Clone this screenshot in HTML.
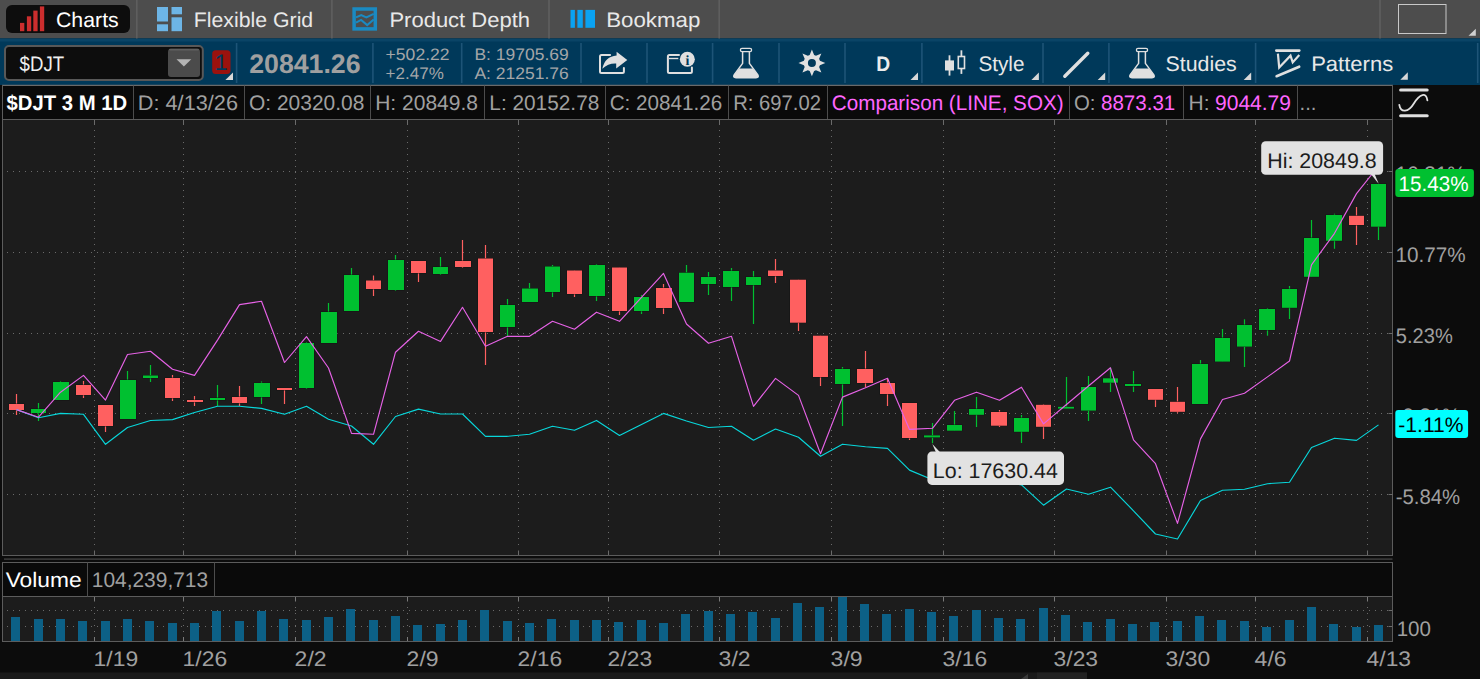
<!DOCTYPE html>
<html lang="en">
<head>
<meta charset="utf-8">
<title>$DJT Chart</title>
<style>
html,body{margin:0;padding:0;background:#0c0c0c;overflow:hidden;}
body{width:1480px;height:679px;font-family:"Liberation Sans", "DejaVu Sans", sans-serif;}
svg{display:block;position:absolute;left:0;top:0;}
</style>
</head>
<body>
<svg width="1480" height="679" viewBox="0 0 1480 679" font-family='"Liberation Sans", "DejaVu Sans", sans-serif' text-rendering="geometricPrecision">
<rect x="0" y="0" width="1480" height="679" fill="#0c0c0c"/>
<rect x="0" y="0" width="1480" height="38.5" fill="#4d4d4d"/>
<rect x="0" y="38.5" width="1480" height="46.5" fill="#00395a"/>
<rect x="0" y="38.5" width="1480" height="3" fill="#0a4466"/>
<g id="tabs">
<rect x="6" y="5" width="124" height="28" rx="6" fill="#0d0d0d"/>
<rect x="20.0" y="22.9" width="4.3" height="8.3" fill="#cc2e2e"/>
<rect x="26.9" y="16.3" width="4.3" height="14.9" fill="#cc2e2e"/>
<rect x="33.3" y="10.6" width="4.3" height="20.6" fill="#cc2e2e"/>
<rect x="39.9" y="6.4" width="4.3" height="24.8" fill="#cc2e2e"/>
<text x="56.0" y="27.0" font-size="21" fill="#ffffff" textLength="62.7" lengthAdjust="spacingAndGlyphs">Charts</text>
<rect x="136.05" y="0" width="1.5" height="38.5" fill="#606060"/>
<rect x="331.15" y="0" width="1.5" height="38.5" fill="#606060"/>
<rect x="548.25" y="0" width="1.5" height="38.5" fill="#606060"/>
<rect x="718.45" y="0" width="1.5" height="38.5" fill="#606060"/>
<rect x="1379.25" y="0" width="1.5" height="38.5" fill="#606060"/>
<rect x="157" y="7" width="11" height="14.5" fill="#6db5e6"/>
<rect x="157" y="24.3" width="11" height="6.9" fill="#6db5e6"/>
<rect x="171.5" y="7" width="10.5" height="7.3" fill="#6db5e6"/>
<rect x="171.5" y="17.3" width="10.5" height="13.9" fill="#6db5e6"/>
<text x="193.8" y="27.0" font-size="21" fill="#e8e8e8" textLength="119.4" lengthAdjust="spacingAndGlyphs">Flexible Grid</text>
<rect x="354.1" y="9" width="21.2" height="19.9" fill="none" stroke="#1a8ac2" stroke-width="3.5"/>
<polyline points="356,17.4 361.2,15 366.4,17.4 373.7,13.8" fill="none" stroke="#1a8ac2" stroke-width="2"/>
<polyline points="356,22.7 361.1,19.9 367.2,25.1 373.7,19.5" fill="none" stroke="#1a8ac2" stroke-width="2"/>
<text x="389.4" y="27.0" font-size="21" fill="#e8e8e8" textLength="140.7" lengthAdjust="spacingAndGlyphs">Product Depth</text>
<rect x="570.5" y="9.9" width="4.4" height="17.9" fill="#0aa2f2"/>
<rect x="577.4" y="9.9" width="5.4" height="17.9" fill="#0aa2f2"/>
<rect x="585.4" y="9.9" width="9.6" height="17.9" fill="#0aa2f2"/>
<text x="606.2" y="27.0" font-size="21" fill="#e8e8e8" textLength="94.1" lengthAdjust="spacingAndGlyphs">Bookmap</text>
<rect x="1398.5" y="4.5" width="47.5" height="29" fill="none" stroke="#c8c8c8" stroke-width="1"/>
<polygon points="1468.5,35.8 1475.8,35.8 1475.8,28.7" fill="#d0d0d0"/>
</g>
<g id="toolbar">
<rect x="235.79999999999998" y="43" width="1.6" height="40" fill="#1d5477"/>
<rect x="372.09999999999997" y="43" width="1.6" height="40" fill="#1d5477"/>
<rect x="460.9" y="43" width="1.6" height="40" fill="#1d5477"/>
<rect x="580.2" y="43" width="1.6" height="40" fill="#1d5477"/>
<rect x="646.2" y="43" width="1.6" height="40" fill="#1d5477"/>
<rect x="711.8000000000001" y="43" width="1.6" height="40" fill="#1d5477"/>
<rect x="778.2" y="43" width="1.6" height="40" fill="#1d5477"/>
<rect x="844.2" y="43" width="1.6" height="40" fill="#1d5477"/>
<rect x="921.1" y="43" width="1.6" height="40" fill="#1d5477"/>
<rect x="1042.2" y="43" width="1.6" height="40" fill="#1d5477"/>
<rect x="1108.1000000000001" y="43" width="1.6" height="40" fill="#1d5477"/>
<rect x="1254.8" y="43" width="1.6" height="40" fill="#1d5477"/>
<rect x="1476.9" y="43" width="1.6" height="40" fill="#1d5477"/>
<rect x="5" y="46" width="197.8" height="34" rx="4" fill="#0d0d0d" stroke="#585858" stroke-width="2"/>
<rect x="168" y="48.8" width="32" height="28.3" rx="3" fill="#4b4b4b"/>
<rect x="169" y="48.8" width="30" height="1.6" rx="0.8" fill="#606060"/>
<polygon points="176.5,59.2 191.3,59.2 183.9,66.6" fill="#b4b4b4"/>
<text x="19.6" y="71.1" font-size="21" fill="#f0f0f0" textLength="44.5" lengthAdjust="spacingAndGlyphs">$DJT</text>
<rect x="212.2" y="50.2" width="18.3" height="23.7" rx="3.5" fill="#9b120e"/>
<text x="214.4" y="70.4" font-size="22.5" fill="#00395a" textLength="13.2" lengthAdjust="spacingAndGlyphs">1</text>
<polygon points="225.4,80 233,80 233,72.4" fill="#d8d8d8"/>
<text x="249.2" y="73.0" font-size="26.8" font-weight="bold" fill="#a0a0a0" textLength="111.4" lengthAdjust="spacingAndGlyphs">20841.26</text>
<text x="385.6" y="60.0" font-size="16.6" fill="#a4a6a8" textLength="64.0" lengthAdjust="spacingAndGlyphs">+502.22</text>
<text x="385.6" y="78.9" font-size="16.6" fill="#a4a6a8" textLength="58.2" lengthAdjust="spacingAndGlyphs">+2.47%</text>
<text x="474.4" y="60.0" font-size="16.6" fill="#a4a6a8" textLength="94.3" lengthAdjust="spacingAndGlyphs">B: 19705.69</text>
<text x="474.4" y="78.9" font-size="16.6" fill="#a4a6a8" textLength="94.3" lengthAdjust="spacingAndGlyphs">A: 21251.76</text>
<path d="M610.1,55 H601.5 Q600,55 600,56.5 V71.4 Q600,72.9 601.5,72.9 H622.4 Q623.9,72.9 623.9,71.4 V68" fill="none" stroke="#e0e0e0" stroke-width="2" stroke-linecap="round"/>
<path d="M616.6,51.8 L627.3,59.9 L616.2,68.4 L616.2,63.5 Q608.5,63 602.3,68.8 Q605,56.5 616.6,55.6 Z" fill="#e0e0e0"/>
<path d="M679,55 H669.4 Q667.9,55 667.9,56.5 V71.4 Q667.9,72.9 669.4,72.9 H690.4 Q691.9,72.9 691.9,71.4 V67.6" fill="none" stroke="#e0e0e0" stroke-width="2" stroke-linecap="round"/>
<line x1="669" y1="58.5" x2="678.3" y2="58.5" stroke="#e0e0e0" stroke-width="1.4"/>
<circle cx="687.35" cy="59.3" r="7.5" fill="#e0e0e0"/>
<text x="687.5" y="64.6" font-size="14" font-weight="bold" font-family='"Liberation Serif", serif' fill="#00395a" text-anchor="middle">i</text>
<g transform="translate(0,0)">
<rect x="740.4" y="48.4" width="11.2" height="3.3" rx="1.6" fill="none" stroke="#e0e0e0" stroke-width="1.3"/>
<path d="M742.6,51.8 V63.4 L734.3,74.6 Q732.6,77.7 736,77.7 H756 Q759.4,77.7 757.7,74.6 L749.4,63.4 V51.8" fill="none" stroke="#e0e0e0" stroke-width="1.5" stroke-linejoin="round"/>
<path d="M739.4,68.4 H752.6 L757.7,74.6 Q759.4,77.7 756,77.7 H736 Q732.6,77.7 734.3,74.6 Z" fill="#e0e0e0"/>
</g>
<path d="M809.69,54.95 L811.90,49.55 L814.11,54.95 L815.99,55.73 L821.38,53.47 L819.12,58.86 L819.90,60.74 L825.30,62.95 L819.90,65.16 L819.12,67.04 L821.38,72.43 L815.99,70.17 L814.11,70.95 L811.90,76.35 L809.69,70.95 L807.81,70.17 L802.42,72.43 L804.68,67.04 L803.90,65.16 L798.50,62.95 L803.90,60.74 L804.68,58.86 L802.42,53.47 L807.81,55.73 Z M815.90,62.95 A4,4 0 1,0 807.90,62.95 A4,4 0 1,0 815.90,62.95 Z" fill="#e0e0e0" fill-rule="evenodd"/>
<text x="876.3" y="70.6" font-size="21" font-weight="bold" fill="#ececec" textLength="13.9" lengthAdjust="spacingAndGlyphs">D</text>
<polygon points="910.5,79.9 918,79.9 918,72.4" fill="#d8d8d8"/>
<rect x="945" y="60.4" width="9" height="10.1" fill="#e0e0e0"/>
<line x1="949.5" y1="55.3" x2="949.5" y2="75.6" stroke="#e0e0e0" stroke-width="1.8"/>
<rect x="958.3" y="56.5" width="6.2" height="12" fill="none" stroke="#e0e0e0" stroke-width="1.6"/>
<line x1="961.4" y1="50.3" x2="961.4" y2="56" stroke="#e0e0e0" stroke-width="1.8"/>
<line x1="961.4" y1="69" x2="961.4" y2="73.9" stroke="#e0e0e0" stroke-width="1.8"/>
<text x="978.4" y="70.7" font-size="21" fill="#e8e8e8" textLength="46.0" lengthAdjust="spacingAndGlyphs">Style</text>
<polygon points="1031.4,79.9 1038.9,79.9 1038.9,72.4" fill="#d8d8d8"/>
<line x1="1064.8" y1="76.2" x2="1087.8" y2="53.2" stroke="#e0e0e0" stroke-width="3.4" stroke-linecap="round"/>
<polygon points="1097.7,79.9 1105.2,79.9 1105.2,72.4" fill="#d8d8d8"/>
<g transform="translate(396.0,0)">
<rect x="740.4" y="48.4" width="11.2" height="3.3" rx="1.6" fill="none" stroke="#e0e0e0" stroke-width="1.3"/>
<path d="M742.6,51.8 V63.4 L734.3,74.6 Q732.6,77.7 736,77.7 H756 Q759.4,77.7 757.7,74.6 L749.4,63.4 V51.8" fill="none" stroke="#e0e0e0" stroke-width="1.5" stroke-linejoin="round"/>
<path d="M739.4,68.4 H752.6 L757.7,74.6 Q759.4,77.7 756,77.7 H736 Q732.6,77.7 734.3,74.6 Z" fill="#e0e0e0"/>
</g>
<text x="1165.5" y="70.7" font-size="21" fill="#e8e8e8" textLength="71.2" lengthAdjust="spacingAndGlyphs">Studies</text>
<polygon points="1243.7,79.9 1251.2,79.9 1251.2,72.4" fill="#d8d8d8"/>
<line x1="1276.3" y1="50.6" x2="1299.3" y2="50.6" stroke="#e0e0e0" stroke-width="2.6" stroke-linecap="round"/>
<polyline points="1277.9,53.6 1279.2,67.5 1290.5,55.7 1292.7,62.4 1299.3,55" fill="none" stroke="#e0e0e0" stroke-width="2.2" stroke-linejoin="miter"/>
<line x1="1276.6" y1="76.2" x2="1299.2" y2="66.7" stroke="#e0e0e0" stroke-width="2.6" stroke-linecap="round"/>
<text x="1311.2" y="70.7" font-size="21" fill="#e8e8e8" textLength="82.0" lengthAdjust="spacingAndGlyphs">Patterns</text>
<polygon points="1400.3,79.8 1407.8,79.8 1407.8,72.3" fill="#d8d8d8"/>
</g>
<g id="info">
<rect x="2.5" y="85" width="1390.0" height="34.5" fill="#0a0a0a"/>
<line x1="2.0" y1="85.4" x2="1393.0" y2="85.4" stroke="#6a6a6a" stroke-width="1.2"/>
<line x1="133.5" y1="85.5" x2="133.5" y2="119" stroke="#4c4c4c" stroke-width="1"/>
<line x1="244.5" y1="85.5" x2="244.5" y2="119" stroke="#4c4c4c" stroke-width="1"/>
<line x1="370.5" y1="85.5" x2="370.5" y2="119" stroke="#4c4c4c" stroke-width="1"/>
<line x1="484.5" y1="85.5" x2="484.5" y2="119" stroke="#4c4c4c" stroke-width="1"/>
<line x1="605.5" y1="85.5" x2="605.5" y2="119" stroke="#4c4c4c" stroke-width="1"/>
<line x1="728.5" y1="85.5" x2="728.5" y2="119" stroke="#4c4c4c" stroke-width="1"/>
<line x1="827.5" y1="85.5" x2="827.5" y2="119" stroke="#4c4c4c" stroke-width="1"/>
<line x1="1069.5" y1="85.5" x2="1069.5" y2="119" stroke="#4c4c4c" stroke-width="1"/>
<line x1="1183.5" y1="85.5" x2="1183.5" y2="119" stroke="#4c4c4c" stroke-width="1"/>
<line x1="1297.5" y1="85.5" x2="1297.5" y2="119" stroke="#4c4c4c" stroke-width="1"/>
<text x="6.6" y="110.0" font-size="21" font-weight="bold" fill="#ffffff" textLength="120.6" lengthAdjust="spacingAndGlyphs">$DJT 3 M 1D</text>
<text x="137.8" y="110.0" font-size="21" fill="#a0a0a0" textLength="100.2" lengthAdjust="spacingAndGlyphs">D: 4/13/26</text>
<text x="249.0" y="110.0" font-size="21" fill="#a0a0a0" textLength="115.3" lengthAdjust="spacingAndGlyphs">O: 20320.08</text>
<text x="375.2" y="110.0" font-size="21" fill="#a0a0a0" textLength="102.8" lengthAdjust="spacingAndGlyphs">H: 20849.8</text>
<text x="489.3" y="110.0" font-size="21" fill="#a0a0a0" textLength="110.0" lengthAdjust="spacingAndGlyphs">L: 20152.78</text>
<text x="609.7" y="110.0" font-size="21" fill="#a0a0a0" textLength="112.5" lengthAdjust="spacingAndGlyphs">C: 20841.26</text>
<text x="733.2" y="110.0" font-size="21" fill="#a0a0a0" textLength="87.8" lengthAdjust="spacingAndGlyphs">R: 697.02</text>
<text x="831.8" y="110.0" font-size="21" fill="#ff66ff" textLength="231.8" lengthAdjust="spacingAndGlyphs">Comparison (LINE, SOX)</text>
<text x="1074.0" y="110.0" font-size="21" fill="#a0a0a0" textLength="21.5" lengthAdjust="spacingAndGlyphs">O:</text>
<text x="1101.0" y="110.0" font-size="21" fill="#ff66ff" textLength="74.3" lengthAdjust="spacingAndGlyphs">8873.31</text>
<text x="1188.5" y="110.0" font-size="21" fill="#a0a0a0" textLength="21.0" lengthAdjust="spacingAndGlyphs">H:</text>
<text x="1215.0" y="110.0" font-size="21" fill="#ff66ff" textLength="76.0" lengthAdjust="spacingAndGlyphs">9044.79</text>
<text x="1299.5" y="110.0" font-size="21" fill="#a0a0a0" textLength="16.9" lengthAdjust="spacingAndGlyphs">...</text>
<line x1="1400.6" y1="89.9" x2="1427.2" y2="89.9" stroke="#e0e0e0" stroke-width="3" stroke-linecap="round"/>
<line x1="1400.6" y1="115.8" x2="1427.2" y2="115.8" stroke="#e0e0e0" stroke-width="3" stroke-linecap="round"/>
<path d="M1399.3,104.8 C1400.6,112.9 1408.3,112.9 1414,103.3 C1419.7,93.7 1426.4,91.8 1427.4,100.4" fill="none" stroke="#e0e0e0" stroke-width="1.8" stroke-linecap="round"/>
</g>
<g id="chart">
<rect x="2.5" y="119.5" width="1390.0" height="436.0" fill="#1c1c1c"/>
<line x1="7" y1="171.5" x2="1391.5" y2="171.5" stroke="#6a6a6a" stroke-width="1" stroke-dasharray="1 5"/>
<line x1="7" y1="252.5" x2="1391.5" y2="252.5" stroke="#6a6a6a" stroke-width="1" stroke-dasharray="1 5"/>
<line x1="7" y1="333.5" x2="1391.5" y2="333.5" stroke="#6a6a6a" stroke-width="1" stroke-dasharray="1 5"/>
<line x1="7" y1="413.5" x2="1391.5" y2="413.5" stroke="#6a6a6a" stroke-width="1" stroke-dasharray="1 5"/>
<line x1="7" y1="494.5" x2="1391.5" y2="494.5" stroke="#6a6a6a" stroke-width="1" stroke-dasharray="1 5"/>
<line x1="94.5" y1="124" x2="94.5" y2="550.5" stroke="#6a6a6a" stroke-width="1" stroke-dasharray="1 5"/>
<line x1="94.5" y1="119.5" x2="94.5" y2="124.5" stroke="#6a6a6a" stroke-width="1"/>
<line x1="94.5" y1="551.0" x2="94.5" y2="555.5" stroke="#6a6a6a" stroke-width="1"/>
<line x1="183.5" y1="124" x2="183.5" y2="550.5" stroke="#6a6a6a" stroke-width="1" stroke-dasharray="1 5"/>
<line x1="183.5" y1="119.5" x2="183.5" y2="124.5" stroke="#6a6a6a" stroke-width="1"/>
<line x1="183.5" y1="551.0" x2="183.5" y2="555.5" stroke="#6a6a6a" stroke-width="1"/>
<line x1="295.5" y1="124" x2="295.5" y2="550.5" stroke="#6a6a6a" stroke-width="1" stroke-dasharray="1 5"/>
<line x1="295.5" y1="119.5" x2="295.5" y2="124.5" stroke="#6a6a6a" stroke-width="1"/>
<line x1="295.5" y1="551.0" x2="295.5" y2="555.5" stroke="#6a6a6a" stroke-width="1"/>
<line x1="407.5" y1="124" x2="407.5" y2="550.5" stroke="#6a6a6a" stroke-width="1" stroke-dasharray="1 5"/>
<line x1="407.5" y1="119.5" x2="407.5" y2="124.5" stroke="#6a6a6a" stroke-width="1"/>
<line x1="407.5" y1="551.0" x2="407.5" y2="555.5" stroke="#6a6a6a" stroke-width="1"/>
<line x1="518.5" y1="124" x2="518.5" y2="550.5" stroke="#6a6a6a" stroke-width="1" stroke-dasharray="1 5"/>
<line x1="518.5" y1="119.5" x2="518.5" y2="124.5" stroke="#6a6a6a" stroke-width="1"/>
<line x1="518.5" y1="551.0" x2="518.5" y2="555.5" stroke="#6a6a6a" stroke-width="1"/>
<line x1="608.5" y1="124" x2="608.5" y2="550.5" stroke="#6a6a6a" stroke-width="1" stroke-dasharray="1 5"/>
<line x1="608.5" y1="119.5" x2="608.5" y2="124.5" stroke="#6a6a6a" stroke-width="1"/>
<line x1="608.5" y1="551.0" x2="608.5" y2="555.5" stroke="#6a6a6a" stroke-width="1"/>
<line x1="719.5" y1="124" x2="719.5" y2="550.5" stroke="#6a6a6a" stroke-width="1" stroke-dasharray="1 5"/>
<line x1="719.5" y1="119.5" x2="719.5" y2="124.5" stroke="#6a6a6a" stroke-width="1"/>
<line x1="719.5" y1="551.0" x2="719.5" y2="555.5" stroke="#6a6a6a" stroke-width="1"/>
<line x1="831.5" y1="124" x2="831.5" y2="550.5" stroke="#6a6a6a" stroke-width="1" stroke-dasharray="1 5"/>
<line x1="831.5" y1="119.5" x2="831.5" y2="124.5" stroke="#6a6a6a" stroke-width="1"/>
<line x1="831.5" y1="551.0" x2="831.5" y2="555.5" stroke="#6a6a6a" stroke-width="1"/>
<line x1="943.5" y1="124" x2="943.5" y2="550.5" stroke="#6a6a6a" stroke-width="1" stroke-dasharray="1 5"/>
<line x1="943.5" y1="119.5" x2="943.5" y2="124.5" stroke="#6a6a6a" stroke-width="1"/>
<line x1="943.5" y1="551.0" x2="943.5" y2="555.5" stroke="#6a6a6a" stroke-width="1"/>
<line x1="1054.5" y1="124" x2="1054.5" y2="550.5" stroke="#6a6a6a" stroke-width="1" stroke-dasharray="1 5"/>
<line x1="1054.5" y1="119.5" x2="1054.5" y2="124.5" stroke="#6a6a6a" stroke-width="1"/>
<line x1="1054.5" y1="551.0" x2="1054.5" y2="555.5" stroke="#6a6a6a" stroke-width="1"/>
<line x1="1166.5" y1="124" x2="1166.5" y2="550.5" stroke="#6a6a6a" stroke-width="1" stroke-dasharray="1 5"/>
<line x1="1166.5" y1="119.5" x2="1166.5" y2="124.5" stroke="#6a6a6a" stroke-width="1"/>
<line x1="1166.5" y1="551.0" x2="1166.5" y2="555.5" stroke="#6a6a6a" stroke-width="1"/>
<line x1="1255.5" y1="124" x2="1255.5" y2="550.5" stroke="#6a6a6a" stroke-width="1" stroke-dasharray="1 5"/>
<line x1="1255.5" y1="119.5" x2="1255.5" y2="124.5" stroke="#6a6a6a" stroke-width="1"/>
<line x1="1255.5" y1="551.0" x2="1255.5" y2="555.5" stroke="#6a6a6a" stroke-width="1"/>
<line x1="1367.5" y1="124" x2="1367.5" y2="550.5" stroke="#6a6a6a" stroke-width="1" stroke-dasharray="1 5"/>
<line x1="1367.5" y1="119.5" x2="1367.5" y2="124.5" stroke="#6a6a6a" stroke-width="1"/>
<line x1="1367.5" y1="551.0" x2="1367.5" y2="555.5" stroke="#6a6a6a" stroke-width="1"/>
<line x1="16.5" y1="394.0" x2="16.5" y2="415.0" stroke="#ff6060" stroke-width="1.2"/>
<rect x="9" y="404.0" width="15" height="6.0" fill="#ff6060" stroke="#121212" stroke-width="0.8" paint-order="stroke"/>
<line x1="38.5" y1="403.0" x2="38.5" y2="421.0" stroke="#00c030" stroke-width="1.2"/>
<rect x="31" y="409.0" width="15" height="4.0" fill="#00c030" stroke="#121212" stroke-width="0.8" paint-order="stroke"/>
<line x1="60.5" y1="381.0" x2="60.5" y2="400.0" stroke="#00c030" stroke-width="1.2"/>
<rect x="53" y="382.0" width="16" height="18.0" fill="#00c030" stroke="#121212" stroke-width="0.8" paint-order="stroke"/>
<line x1="83.5" y1="381.0" x2="83.5" y2="398.0" stroke="#ff6060" stroke-width="1.2"/>
<rect x="76" y="385.0" width="15" height="10.0" fill="#ff6060" stroke="#121212" stroke-width="0.8" paint-order="stroke"/>
<line x1="105.5" y1="405.0" x2="105.5" y2="432.0" stroke="#ff6060" stroke-width="1.2"/>
<rect x="98" y="405.0" width="15" height="21.0" fill="#ff6060" stroke="#121212" stroke-width="0.8" paint-order="stroke"/>
<line x1="127.5" y1="371.0" x2="127.5" y2="419.0" stroke="#00c030" stroke-width="1.2"/>
<rect x="120" y="380.0" width="16" height="39.0" fill="#00c030" stroke="#121212" stroke-width="0.8" paint-order="stroke"/>
<line x1="150.5" y1="365.0" x2="150.5" y2="382.0" stroke="#00c030" stroke-width="1.2"/>
<rect x="143" y="375.5" width="15" height="2.5" fill="#00c030" stroke="#121212" stroke-width="0.8" paint-order="stroke"/>
<line x1="172.5" y1="375.0" x2="172.5" y2="401.0" stroke="#ff6060" stroke-width="1.2"/>
<rect x="165" y="378.0" width="15" height="20.0" fill="#ff6060" stroke="#121212" stroke-width="0.8" paint-order="stroke"/>
<line x1="194.5" y1="396.0" x2="194.5" y2="406.0" stroke="#ff6060" stroke-width="1.2"/>
<rect x="187" y="400.0" width="16" height="2.0" fill="#ff6060" stroke="#121212" stroke-width="0.8" paint-order="stroke"/>
<line x1="217.5" y1="385.0" x2="217.5" y2="406.0" stroke="#00c030" stroke-width="1.2"/>
<rect x="210" y="398.0" width="15" height="2.0" fill="#00c030" stroke="#121212" stroke-width="0.8" paint-order="stroke"/>
<line x1="239.5" y1="386.0" x2="239.5" y2="406.0" stroke="#ff6060" stroke-width="1.2"/>
<rect x="232" y="397.0" width="15" height="6.0" fill="#ff6060" stroke="#121212" stroke-width="0.8" paint-order="stroke"/>
<line x1="261.5" y1="381.5" x2="261.5" y2="404.0" stroke="#00c030" stroke-width="1.2"/>
<rect x="254" y="383.0" width="16" height="14.0" fill="#00c030" stroke="#121212" stroke-width="0.8" paint-order="stroke"/>
<line x1="284.5" y1="388.0" x2="284.5" y2="404.0" stroke="#ff6060" stroke-width="1.2"/>
<rect x="277" y="388.0" width="15" height="2.0" fill="#ff6060" stroke="#121212" stroke-width="0.8" paint-order="stroke"/>
<line x1="306.5" y1="342.0" x2="306.5" y2="389.0" stroke="#00c030" stroke-width="1.2"/>
<rect x="299" y="343.0" width="15" height="45.0" fill="#00c030" stroke="#121212" stroke-width="0.8" paint-order="stroke"/>
<line x1="328.5" y1="303.0" x2="328.5" y2="343.0" stroke="#00c030" stroke-width="1.2"/>
<rect x="321" y="312.0" width="16" height="31.0" fill="#00c030" stroke="#121212" stroke-width="0.8" paint-order="stroke"/>
<line x1="351.5" y1="268.0" x2="351.5" y2="311.0" stroke="#00c030" stroke-width="1.2"/>
<rect x="344" y="275.0" width="15" height="36.0" fill="#00c030" stroke="#121212" stroke-width="0.8" paint-order="stroke"/>
<line x1="373.5" y1="275.5" x2="373.5" y2="296.0" stroke="#ff6060" stroke-width="1.2"/>
<rect x="366" y="280.5" width="15" height="8.5" fill="#ff6060" stroke="#121212" stroke-width="0.8" paint-order="stroke"/>
<line x1="395.5" y1="255.0" x2="395.5" y2="291.0" stroke="#00c030" stroke-width="1.2"/>
<rect x="388" y="260.0" width="16" height="30.0" fill="#00c030" stroke="#121212" stroke-width="0.8" paint-order="stroke"/>
<line x1="418.5" y1="261.0" x2="418.5" y2="282.0" stroke="#ff6060" stroke-width="1.2"/>
<rect x="411" y="261.0" width="15" height="12.0" fill="#ff6060" stroke="#121212" stroke-width="0.8" paint-order="stroke"/>
<line x1="440.5" y1="257.0" x2="440.5" y2="275.0" stroke="#00c030" stroke-width="1.2"/>
<rect x="433" y="267.0" width="15" height="7.0" fill="#00c030" stroke="#121212" stroke-width="0.8" paint-order="stroke"/>
<line x1="462.5" y1="240.0" x2="462.5" y2="268.0" stroke="#ff6060" stroke-width="1.2"/>
<rect x="455" y="261.0" width="16" height="6.0" fill="#ff6060" stroke="#121212" stroke-width="0.8" paint-order="stroke"/>
<line x1="485.5" y1="245.0" x2="485.5" y2="365.0" stroke="#ff6060" stroke-width="1.2"/>
<rect x="478" y="258.5" width="15" height="73.5" fill="#ff6060" stroke="#121212" stroke-width="0.8" paint-order="stroke"/>
<line x1="507.5" y1="299.0" x2="507.5" y2="336.0" stroke="#00c030" stroke-width="1.2"/>
<rect x="500" y="305.0" width="15" height="22.0" fill="#00c030" stroke="#121212" stroke-width="0.8" paint-order="stroke"/>
<line x1="529.5" y1="283.0" x2="529.5" y2="302.0" stroke="#00c030" stroke-width="1.2"/>
<rect x="522" y="288.5" width="16" height="13.5" fill="#00c030" stroke="#121212" stroke-width="0.8" paint-order="stroke"/>
<line x1="552.5" y1="265.0" x2="552.5" y2="297.0" stroke="#00c030" stroke-width="1.2"/>
<rect x="545" y="266.5" width="15" height="25.5" fill="#00c030" stroke="#121212" stroke-width="0.8" paint-order="stroke"/>
<line x1="574.5" y1="270.0" x2="574.5" y2="297.0" stroke="#ff6060" stroke-width="1.2"/>
<rect x="567" y="270.5" width="15" height="23.5" fill="#ff6060" stroke="#121212" stroke-width="0.8" paint-order="stroke"/>
<line x1="596.5" y1="264.0" x2="596.5" y2="301.0" stroke="#00c030" stroke-width="1.2"/>
<rect x="589" y="265.0" width="16" height="31.0" fill="#00c030" stroke="#121212" stroke-width="0.8" paint-order="stroke"/>
<line x1="619.5" y1="267.5" x2="619.5" y2="315.0" stroke="#ff6060" stroke-width="1.2"/>
<rect x="612" y="267.5" width="15" height="43.5" fill="#ff6060" stroke="#121212" stroke-width="0.8" paint-order="stroke"/>
<line x1="641.5" y1="295.0" x2="641.5" y2="314.0" stroke="#00c030" stroke-width="1.2"/>
<rect x="634" y="297.0" width="15" height="14.0" fill="#00c030" stroke="#121212" stroke-width="0.8" paint-order="stroke"/>
<line x1="663.5" y1="284.0" x2="663.5" y2="314.0" stroke="#ff6060" stroke-width="1.2"/>
<rect x="656" y="288.0" width="16" height="20.0" fill="#ff6060" stroke="#121212" stroke-width="0.8" paint-order="stroke"/>
<line x1="686.5" y1="265.0" x2="686.5" y2="302.0" stroke="#00c030" stroke-width="1.2"/>
<rect x="679" y="272.7" width="15" height="29.3" fill="#00c030" stroke="#121212" stroke-width="0.8" paint-order="stroke"/>
<line x1="708.5" y1="272.0" x2="708.5" y2="295.0" stroke="#00c030" stroke-width="1.2"/>
<rect x="701" y="277.0" width="15" height="7.0" fill="#00c030" stroke="#121212" stroke-width="0.8" paint-order="stroke"/>
<line x1="731.5" y1="268.0" x2="731.5" y2="301.0" stroke="#00c030" stroke-width="1.2"/>
<rect x="723" y="271.0" width="16" height="16.0" fill="#00c030" stroke="#121212" stroke-width="0.8" paint-order="stroke"/>
<line x1="753.5" y1="271.0" x2="753.5" y2="324.0" stroke="#00c030" stroke-width="1.2"/>
<rect x="746" y="277.0" width="15" height="8.0" fill="#00c030" stroke="#121212" stroke-width="0.8" paint-order="stroke"/>
<line x1="775.5" y1="259.0" x2="775.5" y2="283.0" stroke="#ff6060" stroke-width="1.2"/>
<rect x="768" y="270.5" width="15" height="5.5" fill="#ff6060" stroke="#121212" stroke-width="0.8" paint-order="stroke"/>
<line x1="798.5" y1="279.5" x2="798.5" y2="331.0" stroke="#ff6060" stroke-width="1.2"/>
<rect x="790" y="279.7" width="16" height="43.0" fill="#ff6060" stroke="#121212" stroke-width="0.8" paint-order="stroke"/>
<line x1="820.5" y1="335.5" x2="820.5" y2="386.0" stroke="#ff6060" stroke-width="1.2"/>
<rect x="813" y="335.7" width="15" height="41.3" fill="#ff6060" stroke="#121212" stroke-width="0.8" paint-order="stroke"/>
<line x1="842.5" y1="367.0" x2="842.5" y2="426.0" stroke="#00c030" stroke-width="1.2"/>
<rect x="835" y="369.0" width="15" height="15.0" fill="#00c030" stroke="#121212" stroke-width="0.8" paint-order="stroke"/>
<line x1="865.5" y1="351.0" x2="865.5" y2="387.0" stroke="#ff6060" stroke-width="1.2"/>
<rect x="857" y="369.0" width="16" height="14.0" fill="#ff6060" stroke="#121212" stroke-width="0.8" paint-order="stroke"/>
<line x1="887.5" y1="378.5" x2="887.5" y2="406.0" stroke="#ff6060" stroke-width="1.2"/>
<rect x="880" y="383.0" width="15" height="11.0" fill="#ff6060" stroke="#121212" stroke-width="0.8" paint-order="stroke"/>
<line x1="909.5" y1="403.0" x2="909.5" y2="440.0" stroke="#ff6060" stroke-width="1.2"/>
<rect x="902" y="403.0" width="15" height="35.0" fill="#ff6060" stroke="#121212" stroke-width="0.8" paint-order="stroke"/>
<line x1="932.5" y1="423.0" x2="932.5" y2="443.3" stroke="#00c030" stroke-width="1.2"/>
<rect x="924" y="435.4" width="16" height="2.0" fill="#00c030" stroke="#121212" stroke-width="0.8" paint-order="stroke"/>
<line x1="954.5" y1="411.0" x2="954.5" y2="430.7" stroke="#00c030" stroke-width="1.2"/>
<rect x="947" y="425.0" width="15" height="5.7" fill="#00c030" stroke="#121212" stroke-width="0.8" paint-order="stroke"/>
<line x1="976.5" y1="397.0" x2="976.5" y2="427.0" stroke="#00c030" stroke-width="1.2"/>
<rect x="969" y="409.0" width="15" height="5.8" fill="#00c030" stroke="#121212" stroke-width="0.8" paint-order="stroke"/>
<line x1="999.5" y1="410.0" x2="999.5" y2="427.0" stroke="#ff6060" stroke-width="1.2"/>
<rect x="991" y="412.0" width="16" height="13.7" fill="#ff6060" stroke="#121212" stroke-width="0.8" paint-order="stroke"/>
<line x1="1021.5" y1="415.0" x2="1021.5" y2="443.0" stroke="#00c030" stroke-width="1.2"/>
<rect x="1014" y="418.0" width="15" height="13.8" fill="#00c030" stroke="#121212" stroke-width="0.8" paint-order="stroke"/>
<line x1="1043.5" y1="404.0" x2="1043.5" y2="439.0" stroke="#ff6060" stroke-width="1.2"/>
<rect x="1036" y="404.8" width="15" height="22.0" fill="#ff6060" stroke="#121212" stroke-width="0.8" paint-order="stroke"/>
<line x1="1066.5" y1="377.0" x2="1066.5" y2="408.6" stroke="#00c030" stroke-width="1.2"/>
<rect x="1058" y="406.8" width="16" height="1.8" fill="#00c030" stroke="#121212" stroke-width="0.8" paint-order="stroke"/>
<line x1="1088.5" y1="376.0" x2="1088.5" y2="421.0" stroke="#00c030" stroke-width="1.2"/>
<rect x="1081" y="387.0" width="15" height="23.6" fill="#00c030" stroke="#121212" stroke-width="0.8" paint-order="stroke"/>
<line x1="1110.5" y1="367.4" x2="1110.5" y2="392.0" stroke="#00c030" stroke-width="1.2"/>
<rect x="1103" y="378.3" width="15" height="4.4" fill="#00c030" stroke="#121212" stroke-width="0.8" paint-order="stroke"/>
<line x1="1133.5" y1="371.0" x2="1133.5" y2="392.0" stroke="#00c030" stroke-width="1.2"/>
<rect x="1125" y="384.0" width="16" height="2.0" fill="#00c030" stroke="#121212" stroke-width="0.8" paint-order="stroke"/>
<line x1="1155.5" y1="389.0" x2="1155.5" y2="407.0" stroke="#ff6060" stroke-width="1.2"/>
<rect x="1148" y="389.0" width="15" height="10.8" fill="#ff6060" stroke="#121212" stroke-width="0.8" paint-order="stroke"/>
<line x1="1177.5" y1="387.0" x2="1177.5" y2="413.3" stroke="#ff6060" stroke-width="1.2"/>
<rect x="1170" y="401.8" width="15" height="10.0" fill="#ff6060" stroke="#121212" stroke-width="0.8" paint-order="stroke"/>
<line x1="1200.5" y1="360.0" x2="1200.5" y2="404.0" stroke="#00c030" stroke-width="1.2"/>
<rect x="1192" y="364.0" width="16" height="40.0" fill="#00c030" stroke="#121212" stroke-width="0.8" paint-order="stroke"/>
<line x1="1222.5" y1="329.0" x2="1222.5" y2="361.6" stroke="#00c030" stroke-width="1.2"/>
<rect x="1215" y="338.0" width="15" height="23.6" fill="#00c030" stroke="#121212" stroke-width="0.8" paint-order="stroke"/>
<line x1="1244.5" y1="319.3" x2="1244.5" y2="367.0" stroke="#00c030" stroke-width="1.2"/>
<rect x="1237" y="325.0" width="15" height="21.6" fill="#00c030" stroke="#121212" stroke-width="0.8" paint-order="stroke"/>
<line x1="1267.5" y1="308.0" x2="1267.5" y2="335.7" stroke="#00c030" stroke-width="1.2"/>
<rect x="1259" y="309.0" width="16" height="21.0" fill="#00c030" stroke="#121212" stroke-width="0.8" paint-order="stroke"/>
<line x1="1289.5" y1="286.0" x2="1289.5" y2="319.0" stroke="#00c030" stroke-width="1.2"/>
<rect x="1282" y="289.0" width="15" height="18.8" fill="#00c030" stroke="#121212" stroke-width="0.8" paint-order="stroke"/>
<line x1="1311.5" y1="220.0" x2="1311.5" y2="276.8" stroke="#00c030" stroke-width="1.2"/>
<rect x="1304" y="238.0" width="15" height="38.8" fill="#00c030" stroke="#121212" stroke-width="0.8" paint-order="stroke"/>
<line x1="1334.5" y1="213.7" x2="1334.5" y2="248.8" stroke="#00c030" stroke-width="1.2"/>
<rect x="1326" y="215.0" width="16" height="25.8" fill="#00c030" stroke="#121212" stroke-width="0.8" paint-order="stroke"/>
<line x1="1356.5" y1="207.0" x2="1356.5" y2="245.0" stroke="#ff6060" stroke-width="1.2"/>
<rect x="1349" y="215.8" width="15" height="9.2" fill="#ff6060" stroke="#121212" stroke-width="0.8" paint-order="stroke"/>
<line x1="1378.5" y1="184.0" x2="1378.5" y2="240.0" stroke="#00c030" stroke-width="1.2"/>
<rect x="1371" y="184.0" width="15" height="42.7" fill="#00c030" stroke="#121212" stroke-width="0.8" paint-order="stroke"/>
<polyline points="16.5,409.6 38.5,417.8 60.5,413.4 83.5,414.3 105.5,444.3 127.5,427.5 150.5,420.5 172.5,419.6 194.5,412.5 217.5,406.3 239.5,406.2 261.5,408.4 284.5,414.3 306.5,406.3 328.5,419.3 351.5,426.0 373.5,444.3 395.5,416.5 418.5,409.1 440.5,414.0 462.5,414.0 485.5,436.3 507.5,436.3 529.5,434.3 552.5,426.3 574.5,430.3 596.5,420.4 619.5,435.4 641.5,424.4 663.5,413.4 686.5,421.0 708.5,427.5 731.5,426.3 753.5,440.2 775.5,429.0 798.5,437.3 820.5,456.3 842.5,444.2 865.5,446.8 887.5,448.4 909.5,470.1 932.5,479.8 954.5,481.0 976.5,483.0 999.5,481.0 1021.5,484.9 1043.5,505.2 1066.5,489.0 1088.5,494.3 1110.5,487.2 1133.5,510.8 1155.5,534.0 1177.5,539.0 1200.5,500.5 1222.5,490.2 1244.5,489.3 1267.5,483.7 1289.5,482.2 1311.5,447.5 1334.5,438.2 1356.5,440.4 1378.5,424.9" fill="none" stroke="#08d6da" stroke-width="1.15" stroke-linejoin="round"/>
<polyline points="16.5,409.6 38.5,417.2 60.5,392.2 83.5,375.4 105.5,400.1 127.5,354.5 150.5,351.3 172.5,369.2 194.5,375.4 217.5,340.1 239.5,304.6 261.5,301.3 284.5,362.5 306.5,336.7 328.5,368.0 351.5,433.4 373.5,434.3 395.5,352.2 418.5,331.3 440.5,341.4 462.5,307.3 485.5,346.3 507.5,336.3 529.5,336.3 552.5,321.3 574.5,329.2 596.5,312.2 619.5,321.3 641.5,297.4 663.5,273.4 686.5,324.0 708.5,343.3 731.5,336.3 753.5,406.4 775.5,378.4 798.5,395.4 820.5,453.7 842.5,397.1 865.5,387.7 887.5,378.3 909.5,429.4 932.5,428.3 954.5,400.3 976.5,392.2 999.5,400.3 1021.5,387.2 1043.5,423.9 1066.5,404.5 1088.5,386.0 1110.5,367.8 1133.5,439.8 1155.5,463.7 1177.5,523.4 1200.5,438.9 1222.5,399.5 1244.5,393.3 1267.5,376.9 1289.5,361.0 1311.5,264.8 1334.5,233.3 1356.5,193.6 1378.5,166.0" fill="none" stroke="#e662e6" stroke-width="1.15" stroke-linejoin="round"/>
<rect x="2.5" y="119.5" width="1390.0" height="436.0" fill="none" stroke="#5c5c5c" stroke-width="1"/>
<line x1="2.5" y1="85" x2="2.5" y2="119.5" stroke="#5c5c5c" stroke-width="1"/>
<line x1="1392.5" y1="85" x2="1392.5" y2="119.5" stroke="#5c5c5c" stroke-width="1"/>
<polygon points="1370.8,174 1374.6,174 1378.7,183.8" fill="#e2e2e2"/>
<rect x="1261.2" y="141.2" width="121.9" height="33.6" rx="4.5" fill="#e2e2e2"/>
<text x="1267.3" y="167.9" font-size="21.2" fill="#1c1c1c" textLength="109.3" lengthAdjust="spacingAndGlyphs">Hi: 20849.8</text>
<polygon points="932.3,444 936,452.5 940.3,452.5" fill="#e2e2e2"/>
<rect x="927.4" y="451.6" width="136.6" height="33.3" rx="4.5" fill="#e2e2e2"/>
<text x="932.8" y="478.0" font-size="21.2" fill="#1c1c1c" textLength="125.1" lengthAdjust="spacingAndGlyphs">Lo: 17630.44</text>
<line x1="1388.5" y1="171.5" x2="1392.5" y2="171.5" stroke="#6a6a6a" stroke-width="1"/>
<line x1="1388.5" y1="252.5" x2="1392.5" y2="252.5" stroke="#6a6a6a" stroke-width="1"/>
<line x1="1388.5" y1="333.5" x2="1392.5" y2="333.5" stroke="#6a6a6a" stroke-width="1"/>
<line x1="1388.5" y1="413.5" x2="1392.5" y2="413.5" stroke="#6a6a6a" stroke-width="1"/>
<line x1="1388.5" y1="494.5" x2="1392.5" y2="494.5" stroke="#6a6a6a" stroke-width="1"/>
<text x="1395.4" y="180.9" font-size="21" fill="#a0a0a0" textLength="70.2" lengthAdjust="spacingAndGlyphs">16.31%</text>
<text x="1395.4" y="261.9" font-size="21" fill="#a0a0a0" textLength="70.2" lengthAdjust="spacingAndGlyphs">10.77%</text>
<text x="1395.8" y="342.9" font-size="21" fill="#a0a0a0" textLength="57.0" lengthAdjust="spacingAndGlyphs">5.23%</text>
<text x="1395.7" y="422.8" font-size="21" fill="#a0a0a0" textLength="64.4" lengthAdjust="spacingAndGlyphs">-0.31%</text>
<text x="1395.7" y="503.6" font-size="21" fill="#a0a0a0" textLength="64.4" lengthAdjust="spacingAndGlyphs">-5.84%</text>
<rect x="1395.3" y="169" width="78.6" height="28.1" rx="3" fill="#00c030"/>
<text x="1398.6" y="191.1" font-size="21" fill="#ffffff" textLength="70.0" lengthAdjust="spacingAndGlyphs">15.43%</text>
<rect x="1395.3" y="410.1" width="72.8" height="27.8" rx="3" fill="#00ffff"/>
<text x="1398.3" y="431.8" font-size="21" fill="#000000" textLength="65.3" lengthAdjust="spacingAndGlyphs">-1.11%</text>
</g>
<g id="volume">
<rect x="4" y="558.3" width="1388.5" height="1.6" fill="#3a3a3a"/>
<rect x="2.5" y="562.5" width="1390.0" height="34.0" fill="#0a0a0a"/>
<rect x="2.5" y="596.5" width="1390.0" height="45.0" fill="#1c1c1c"/>
<line x1="7" y1="610.5" x2="1392.5" y2="610.5" stroke="#6a6a6a" stroke-width="1" stroke-dasharray="1 5"/>
<line x1="1388.5" y1="610.5" x2="1392.5" y2="610.5" stroke="#6a6a6a" stroke-width="1"/>
<line x1="7" y1="626.5" x2="1392.5" y2="626.5" stroke="#6a6a6a" stroke-width="1" stroke-dasharray="1 5"/>
<line x1="1388.5" y1="626.5" x2="1392.5" y2="626.5" stroke="#6a6a6a" stroke-width="1"/>
<line x1="94.5" y1="607" x2="94.5" y2="636.5" stroke="#6a6a6a" stroke-width="1" stroke-dasharray="1 5"/>
<line x1="94.5" y1="596.5" x2="94.5" y2="601.5" stroke="#7a7a7a" stroke-width="1"/>
<line x1="94.5" y1="637.0" x2="94.5" y2="641.5" stroke="#7a7a7a" stroke-width="1"/>
<line x1="183.5" y1="607" x2="183.5" y2="636.5" stroke="#6a6a6a" stroke-width="1" stroke-dasharray="1 5"/>
<line x1="183.5" y1="596.5" x2="183.5" y2="601.5" stroke="#7a7a7a" stroke-width="1"/>
<line x1="183.5" y1="637.0" x2="183.5" y2="641.5" stroke="#7a7a7a" stroke-width="1"/>
<line x1="295.5" y1="607" x2="295.5" y2="636.5" stroke="#6a6a6a" stroke-width="1" stroke-dasharray="1 5"/>
<line x1="295.5" y1="596.5" x2="295.5" y2="601.5" stroke="#7a7a7a" stroke-width="1"/>
<line x1="295.5" y1="637.0" x2="295.5" y2="641.5" stroke="#7a7a7a" stroke-width="1"/>
<line x1="407.5" y1="607" x2="407.5" y2="636.5" stroke="#6a6a6a" stroke-width="1" stroke-dasharray="1 5"/>
<line x1="407.5" y1="596.5" x2="407.5" y2="601.5" stroke="#7a7a7a" stroke-width="1"/>
<line x1="407.5" y1="637.0" x2="407.5" y2="641.5" stroke="#7a7a7a" stroke-width="1"/>
<line x1="518.5" y1="607" x2="518.5" y2="636.5" stroke="#6a6a6a" stroke-width="1" stroke-dasharray="1 5"/>
<line x1="518.5" y1="596.5" x2="518.5" y2="601.5" stroke="#7a7a7a" stroke-width="1"/>
<line x1="518.5" y1="637.0" x2="518.5" y2="641.5" stroke="#7a7a7a" stroke-width="1"/>
<line x1="608.5" y1="607" x2="608.5" y2="636.5" stroke="#6a6a6a" stroke-width="1" stroke-dasharray="1 5"/>
<line x1="608.5" y1="596.5" x2="608.5" y2="601.5" stroke="#7a7a7a" stroke-width="1"/>
<line x1="608.5" y1="637.0" x2="608.5" y2="641.5" stroke="#7a7a7a" stroke-width="1"/>
<line x1="719.5" y1="607" x2="719.5" y2="636.5" stroke="#6a6a6a" stroke-width="1" stroke-dasharray="1 5"/>
<line x1="719.5" y1="596.5" x2="719.5" y2="601.5" stroke="#7a7a7a" stroke-width="1"/>
<line x1="719.5" y1="637.0" x2="719.5" y2="641.5" stroke="#7a7a7a" stroke-width="1"/>
<line x1="831.5" y1="607" x2="831.5" y2="636.5" stroke="#6a6a6a" stroke-width="1" stroke-dasharray="1 5"/>
<line x1="831.5" y1="596.5" x2="831.5" y2="601.5" stroke="#7a7a7a" stroke-width="1"/>
<line x1="831.5" y1="637.0" x2="831.5" y2="641.5" stroke="#7a7a7a" stroke-width="1"/>
<line x1="943.5" y1="607" x2="943.5" y2="636.5" stroke="#6a6a6a" stroke-width="1" stroke-dasharray="1 5"/>
<line x1="943.5" y1="596.5" x2="943.5" y2="601.5" stroke="#7a7a7a" stroke-width="1"/>
<line x1="943.5" y1="637.0" x2="943.5" y2="641.5" stroke="#7a7a7a" stroke-width="1"/>
<line x1="1054.5" y1="607" x2="1054.5" y2="636.5" stroke="#6a6a6a" stroke-width="1" stroke-dasharray="1 5"/>
<line x1="1054.5" y1="596.5" x2="1054.5" y2="601.5" stroke="#7a7a7a" stroke-width="1"/>
<line x1="1054.5" y1="637.0" x2="1054.5" y2="641.5" stroke="#7a7a7a" stroke-width="1"/>
<line x1="1166.5" y1="607" x2="1166.5" y2="636.5" stroke="#6a6a6a" stroke-width="1" stroke-dasharray="1 5"/>
<line x1="1166.5" y1="596.5" x2="1166.5" y2="601.5" stroke="#7a7a7a" stroke-width="1"/>
<line x1="1166.5" y1="637.0" x2="1166.5" y2="641.5" stroke="#7a7a7a" stroke-width="1"/>
<line x1="1255.5" y1="607" x2="1255.5" y2="636.5" stroke="#6a6a6a" stroke-width="1" stroke-dasharray="1 5"/>
<line x1="1255.5" y1="596.5" x2="1255.5" y2="601.5" stroke="#7a7a7a" stroke-width="1"/>
<line x1="1255.5" y1="637.0" x2="1255.5" y2="641.5" stroke="#7a7a7a" stroke-width="1"/>
<line x1="1367.5" y1="607" x2="1367.5" y2="636.5" stroke="#6a6a6a" stroke-width="1" stroke-dasharray="1 5"/>
<line x1="1367.5" y1="596.5" x2="1367.5" y2="601.5" stroke="#7a7a7a" stroke-width="1"/>
<line x1="1367.5" y1="637.0" x2="1367.5" y2="641.5" stroke="#7a7a7a" stroke-width="1"/>
<rect x="11" y="617" width="9" height="24" fill="#0c6086"/>
<rect x="34" y="619" width="9" height="22" fill="#0c6086"/>
<rect x="56" y="619" width="9" height="22" fill="#0c6086"/>
<rect x="78" y="621" width="9" height="20" fill="#0c6086"/>
<rect x="101" y="621" width="9" height="20" fill="#0c6086"/>
<rect x="123" y="619" width="9" height="22" fill="#0c6086"/>
<rect x="145" y="621" width="9" height="20" fill="#0c6086"/>
<rect x="168" y="623" width="9" height="18" fill="#0c6086"/>
<rect x="190" y="623" width="9" height="18" fill="#0c6086"/>
<rect x="212" y="611" width="9" height="30" fill="#0c6086"/>
<rect x="235" y="621" width="9" height="20" fill="#0c6086"/>
<rect x="257" y="611" width="9" height="30" fill="#0c6086"/>
<rect x="279" y="619" width="9" height="22" fill="#0c6086"/>
<rect x="302" y="620" width="9" height="21" fill="#0c6086"/>
<rect x="324" y="617" width="9" height="24" fill="#0c6086"/>
<rect x="346" y="609" width="9" height="32" fill="#0c6086"/>
<rect x="369" y="620" width="9" height="21" fill="#0c6086"/>
<rect x="391" y="616" width="9" height="25" fill="#0c6086"/>
<rect x="413" y="625" width="9" height="16" fill="#0c6086"/>
<rect x="436" y="624" width="9" height="17" fill="#0c6086"/>
<rect x="458" y="620" width="9" height="21" fill="#0c6086"/>
<rect x="480" y="610" width="9" height="31" fill="#0c6086"/>
<rect x="503" y="621" width="9" height="20" fill="#0c6086"/>
<rect x="525" y="623" width="9" height="18" fill="#0c6086"/>
<rect x="547" y="619" width="9" height="22" fill="#0c6086"/>
<rect x="570" y="620" width="9" height="21" fill="#0c6086"/>
<rect x="592" y="620" width="9" height="21" fill="#0c6086"/>
<rect x="614" y="622" width="9" height="19" fill="#0c6086"/>
<rect x="637" y="620" width="9" height="21" fill="#0c6086"/>
<rect x="659" y="623" width="9" height="18" fill="#0c6086"/>
<rect x="681" y="614" width="9" height="27" fill="#0c6086"/>
<rect x="704" y="611" width="9" height="30" fill="#0c6086"/>
<rect x="726" y="614" width="9" height="27" fill="#0c6086"/>
<rect x="748" y="612" width="9" height="29" fill="#0c6086"/>
<rect x="771" y="618" width="9" height="23" fill="#0c6086"/>
<rect x="793" y="603" width="9" height="38" fill="#0c6086"/>
<rect x="815" y="607" width="9" height="34" fill="#0c6086"/>
<rect x="838" y="597" width="9" height="44" fill="#0c6086"/>
<rect x="860" y="604" width="9" height="37" fill="#0c6086"/>
<rect x="882" y="614" width="9" height="27" fill="#0c6086"/>
<rect x="905" y="609" width="9" height="32" fill="#0c6086"/>
<rect x="927" y="612" width="9" height="29" fill="#0c6086"/>
<rect x="949" y="616" width="9" height="25" fill="#0c6086"/>
<rect x="972" y="610" width="9" height="31" fill="#0c6086"/>
<rect x="994" y="618" width="9" height="23" fill="#0c6086"/>
<rect x="1016" y="619" width="9" height="22" fill="#0c6086"/>
<rect x="1039" y="608" width="9" height="33" fill="#0c6086"/>
<rect x="1061" y="615" width="9" height="26" fill="#0c6086"/>
<rect x="1083" y="622" width="9" height="19" fill="#0c6086"/>
<rect x="1106" y="619" width="9" height="22" fill="#0c6086"/>
<rect x="1128" y="624" width="9" height="17" fill="#0c6086"/>
<rect x="1150" y="622" width="9" height="19" fill="#0c6086"/>
<rect x="1173" y="621" width="9" height="20" fill="#0c6086"/>
<rect x="1195" y="616" width="9" height="25" fill="#0c6086"/>
<rect x="1217" y="620" width="9" height="21" fill="#0c6086"/>
<rect x="1240" y="621" width="9" height="20" fill="#0c6086"/>
<rect x="1262" y="627" width="9" height="14" fill="#0c6086"/>
<rect x="1285" y="620" width="9" height="21" fill="#0c6086"/>
<rect x="1307" y="607" width="9" height="34" fill="#0c6086"/>
<rect x="1329" y="624" width="9" height="17" fill="#0c6086"/>
<rect x="1352" y="627" width="9" height="14" fill="#0c6086"/>
<rect x="1374" y="625" width="9" height="16" fill="#0c6086"/>
<rect x="2.5" y="562.5" width="1390.0" height="79.0" fill="none" stroke="#5c5c5c" stroke-width="1"/>
<line x1="2.5" y1="596.5" x2="1392.5" y2="596.5" stroke="#5c5c5c" stroke-width="1"/>
<line x1="87.5" y1="562.5" x2="87.5" y2="596.5" stroke="#4c4c4c" stroke-width="1"/>
<line x1="214.5" y1="562.5" x2="214.5" y2="596.5" stroke="#4c4c4c" stroke-width="1"/>
<text x="5.7" y="586.8" font-size="21" fill="#ffffff" textLength="75.9" lengthAdjust="spacingAndGlyphs">Volume</text>
<text x="91.8" y="586.8" font-size="21" fill="#a0a0a0" textLength="116.3" lengthAdjust="spacingAndGlyphs">104,239,713</text>
<text x="1396.7" y="636.4" font-size="21" fill="#a0a0a0" textLength="34.3" lengthAdjust="spacingAndGlyphs">100</text>
<text x="93.6" y="666.1" font-size="21" fill="#a0a0a0" textLength="44.6" lengthAdjust="spacingAndGlyphs">1/19</text>
<text x="182.6" y="666.1" font-size="21" fill="#a0a0a0" textLength="44.6" lengthAdjust="spacingAndGlyphs">1/26</text>
<text x="294.6" y="666.1" font-size="21" fill="#a0a0a0" textLength="32.0" lengthAdjust="spacingAndGlyphs">2/2</text>
<text x="406.6" y="666.1" font-size="21" fill="#a0a0a0" textLength="32.0" lengthAdjust="spacingAndGlyphs">2/9</text>
<text x="517.6" y="666.1" font-size="21" fill="#a0a0a0" textLength="44.5" lengthAdjust="spacingAndGlyphs">2/16</text>
<text x="607.6" y="666.1" font-size="21" fill="#a0a0a0" textLength="44.5" lengthAdjust="spacingAndGlyphs">2/23</text>
<text x="718.6" y="666.1" font-size="21" fill="#a0a0a0" textLength="32.0" lengthAdjust="spacingAndGlyphs">3/2</text>
<text x="830.6" y="666.1" font-size="21" fill="#a0a0a0" textLength="32.0" lengthAdjust="spacingAndGlyphs">3/9</text>
<text x="942.6" y="666.1" font-size="21" fill="#a0a0a0" textLength="44.5" lengthAdjust="spacingAndGlyphs">3/16</text>
<text x="1053.6" y="666.1" font-size="21" fill="#a0a0a0" textLength="44.5" lengthAdjust="spacingAndGlyphs">3/23</text>
<text x="1165.6" y="666.1" font-size="21" fill="#a0a0a0" textLength="44.5" lengthAdjust="spacingAndGlyphs">3/30</text>
<text x="1254.6" y="666.1" font-size="21" fill="#a0a0a0" textLength="32.0" lengthAdjust="spacingAndGlyphs">4/6</text>
<text x="1366.6" y="666.1" font-size="21" fill="#a0a0a0" textLength="44.5" lengthAdjust="spacingAndGlyphs">4/13</text>
<rect x="0" y="672.5" width="1087" height="6.5" fill="#1a1a1a"/>
<rect x="1037" y="672.5" width="50" height="6.5" fill="#222222"/>
<polygon points="1021,679 1028,679 1028,674" fill="#3a3a3a"/>
</g>
</svg>
</body>
</html>
